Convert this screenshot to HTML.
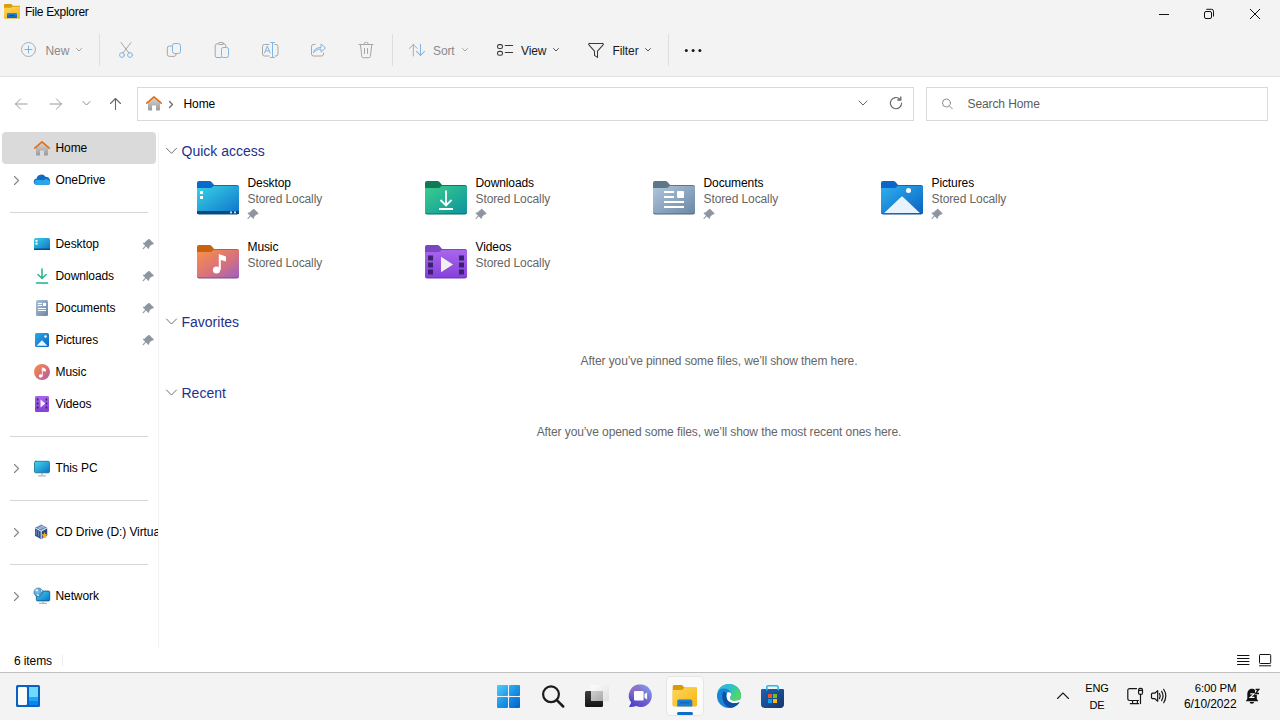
<!DOCTYPE html>
<html><head><meta charset="utf-8">
<style>
*{margin:0;padding:0;box-sizing:border-box}
html,body{width:1280px;height:720px;overflow:hidden;background:#fff;font-family:"Liberation Sans",sans-serif;color:#000}
.a{position:absolute}
.t{position:absolute;white-space:nowrap;font-size:12px;line-height:12px;letter-spacing:-0.1px}
svg{position:absolute;overflow:visible}
#top{left:0;top:0;width:1280px;height:77px;background:#f3f3f3;border-bottom:1px solid #e3e3e3}
.sep{position:absolute;width:1px;background:#dedede}
.box{position:absolute;border:1px solid #d9d9d9;background:#fff}
.navsep{position:absolute;left:10px;width:138px;height:1px;background:#d5d5d5}
.hdr{position:absolute;font-size:14px;line-height:14px;color:#23318e;white-space:nowrap}
.gray{color:#666}
#task{left:0;top:672px;width:1280px;height:48px;background:#f3f3f3;border-top:1px solid #c0c0c0}
</style></head><body>
<div id="top" class="a"></div>

<!-- title -->
<div class="t" style="left:25px;top:6px;letter-spacing:-0.3px">File Explorer</div>

<!-- command bar text -->
<div class="t" style="left:45.5px;top:45px;color:#8a8a8a">New</div>
<div class="t" style="left:433px;top:45px;color:#8a8a8a">Sort</div>
<div class="t" style="left:521px;top:45px;color:#1a1a1a">View</div>
<div class="t" style="left:612.5px;top:45px;color:#1a1a1a">Filter</div>
<div class="sep" style="left:99px;top:34px;height:32px"></div>
<div class="sep" style="left:392px;top:34px;height:32px"></div>
<div class="sep" style="left:668px;top:34px;height:32px"></div>

<!-- address row -->
<div class="box" style="left:137px;top:87px;width:777px;height:34px"></div>
<div class="box" style="left:926px;top:87px;width:342px;height:34px"></div>
<div class="t" style="left:183.5px;top:98px">Home</div>
<div class="t" style="left:967.5px;top:98px;color:#5c5c5c">Search Home</div>

<!-- nav pane -->
<div class="a" style="left:2px;top:132px;width:154px;height:32px;background:#dadada;border-radius:4px"></div>
<div class="a" style="left:158px;top:132px;width:1px;height:517px;background:#f3f3f3"></div>
<div class="t" style="left:55.5px;top:142px">Home</div>
<div class="t" style="left:55.5px;top:174px">OneDrive</div>
<div class="navsep" style="top:212px"></div>
<div class="t" style="left:55.5px;top:238px">Desktop</div>
<div class="t" style="left:55.5px;top:270px">Downloads</div>
<div class="t" style="left:55.5px;top:302px">Documents</div>
<div class="t" style="left:55.5px;top:334px">Pictures</div>
<div class="t" style="left:55.5px;top:366px">Music</div>
<div class="t" style="left:55.5px;top:398px">Videos</div>
<div class="navsep" style="top:436px"></div>
<div class="t" style="left:55.5px;top:462px">This PC</div>
<div class="navsep" style="top:500px"></div>
<div class="a" style="left:0;top:520px;width:158px;height:24px;overflow:hidden"><div class="t" style="left:55.5px;top:6px">CD Drive (D:) Virtual Box</div></div>
<div class="navsep" style="top:564px"></div>
<div class="t" style="left:55.5px;top:590px">Network</div>

<!-- main content -->
<div class="hdr" style="left:181.5px;top:143.5px">Quick access</div>
<div class="hdr" style="left:181.5px;top:315px">Favorites</div>
<div class="hdr" style="left:181.5px;top:385.5px">Recent</div>

<div class="t" style="left:247.5px;top:177px">Desktop</div>
<div class="t gray" style="left:247.5px;top:192.5px">Stored Locally</div>
<div class="t" style="left:475.5px;top:177px">Downloads</div>
<div class="t gray" style="left:475.5px;top:192.5px">Stored Locally</div>
<div class="t" style="left:703.5px;top:177px">Documents</div>
<div class="t gray" style="left:703.5px;top:192.5px">Stored Locally</div>
<div class="t" style="left:931.5px;top:177px">Pictures</div>
<div class="t gray" style="left:931.5px;top:192.5px">Stored Locally</div>
<div class="t" style="left:247.5px;top:241px">Music</div>
<div class="t gray" style="left:247.5px;top:256.5px">Stored Locally</div>
<div class="t" style="left:475.5px;top:241px">Videos</div>
<div class="t gray" style="left:475.5px;top:256.5px">Stored Locally</div>

<div class="t gray" style="left:158px;width:1122px;text-align:center;top:355px">After you’ve pinned some files, we’ll show them here.</div>
<div class="t gray" style="left:158px;width:1122px;text-align:center;top:425.5px">After you’ve opened some files, we’ll show the most recent ones here.</div>

<!-- status bar -->
<div class="t" style="left:14px;top:654.5px">6 items</div>
<div class="a" style="left:62px;top:655px;width:1px;height:11px;background:#ececec"></div>

<!-- taskbar -->
<div id="task" class="a"></div>
<div class="a" style="left:666px;top:676px;width:38px;height:40px;background:#fafafa;border:1px solid #e6e6e6;border-radius:4px"></div>
<div class="a" style="left:677px;top:712px;width:16px;height:3px;background:#0a6fcc;border-radius:2px"></div>
<div class="t" style="left:1085px;top:683px;font-size:11px;line-height:11px;width:24px;text-align:center">ENG</div>
<div class="t" style="left:1085px;top:699.5px;font-size:11px;line-height:11px;width:24px;text-align:center">DE</div>
<div class="t" style="left:1136px;width:100.5px;text-align:right;top:682.5px;font-size:11.4px;line-height:11.4px">6:00 PM</div>
<div class="t" style="left:1136px;width:100.5px;text-align:right;top:697.5px;font-size:12px;line-height:12px">6/10/2022</div>


<!-- ===== ICONS ===== -->
<!-- title folder -->
<svg style="left:4px;top:4px" width="16" height="14" viewBox="0 0 16 14">
 <defs><linearGradient id="tf" x1="0" y1="0" x2="0.6" y2="1"><stop offset="0" stop-color="#ffd862"/><stop offset="1" stop-color="#f8b81c"/></linearGradient>
 <linearGradient id="tb" x1="0" y1="0" x2="0" y2="1"><stop offset="0" stop-color="#1a90e6"/><stop offset="1" stop-color="#0b62c0"/></linearGradient></defs>
 <path d="M0,1 a1,1 0 0 1 1,-1 h6 a1,1 0 0 1 0.8,0.4 l1,1.4 h6.7 a0.5,0.5 0 0 1 0.5,0.5 v12.2 h-16z" fill="#d99e0a"/>
 <path d="M0,3.8 h6.8 a1,1 0 0 0 0.7,-0.3 l0.8,-0.8 h7.7 v10.8 a0.5,0.5 0 0 1 -0.5,0.5 h-15 a0.5,0.5 0 0 1 -0.5,-0.5z" fill="url(#tf)"/>
 <path d="M3,14 v-4 a1.1,1.1 0 0 1 1.1,-1.1 h7.8 a1.1,1.1 0 0 1 1.1,1.1 v4z" fill="url(#tb)"/>
 <rect x="5.5" y="11" width="5" height="1.1" fill="#0c4a94"/>
</svg>
<!-- window controls -->
<svg style="left:1150px;top:0" width="130" height="30" viewBox="1150 0 130 30" fill="none" stroke="#111" stroke-width="1">
 <path d="M1159,14.5 h10"/>
 <rect x="1204.5" y="11.5" width="7" height="7" rx="1.5"/>
 <path d="M1206.3,9.3 h5.2 a2,2 0 0 1 2,2 v5.2" />
 <path d="M1250,9 l10,10 M1260,9 l-10,10"/>
</svg>

<!-- command bar icons -->
<svg style="left:0;top:30px" width="720" height="40" viewBox="0 30 720 40" fill="none" stroke-linecap="round" stroke-linejoin="round">
 <!-- New -->
 <circle cx="28.5" cy="49.5" r="7" stroke="#adadad" stroke-width="1"/>
 <path d="M28.5,46 v7 M25,49.5 h7" stroke="#79b0e0" stroke-width="1"/>
 <path d="M76.5,48.5 l2.5,2.5 l2.5,-2.5" stroke="#a0a0a0" stroke-width="1"/>
 <!-- Cut -->
 <path d="M121,42.5 L129,53 M131,42.5 L123,53" stroke="#a6a6a6" stroke-width="1"/>
 <circle cx="122" cy="55" r="2.4" stroke="#82b6e2" stroke-width="1"/>
 <circle cx="130" cy="55" r="2.4" stroke="#82b6e2" stroke-width="1"/>
 <!-- Copy -->
 <rect x="172.5" y="43.5" width="8" height="10" rx="2" stroke="#82b6e2" stroke-width="1"/>
 <path d="M171.5,46 h-2 a2.2,2.2 0 0 0 -2.2,2.2 v6 a2.2,2.2 0 0 0 2.2,2.2 h4.5 a2.2,2.2 0 0 0 2.2,-2.2" stroke="#a6a6a6" stroke-width="1"/>
 <!-- Paste -->
 <path d="M221,57.5 h-4 a1.8,1.8 0 0 1 -1.8,-1.8 v-10 a1.8,1.8 0 0 1 1.8,-1.8 h1.5 M222.5,43.9 h1.5 a1.8,1.8 0 0 1 1.8,1.8 v1" stroke="#a6a6a6" stroke-width="1"/>
 <rect x="218.5" y="42.5" width="5" height="2" rx="1" stroke="#a6a6a6" stroke-width="1"/>
 <rect x="221.5" y="47.5" width="7" height="10" rx="1.8" stroke="#82b6e2" stroke-width="1"/>
 <!-- Rename -->
 <path d="M269,44.5 h-4.5 a2,2 0 0 0 -2,2 v7.5 a2,2 0 0 0 2,2 h4.5 M275,44.5 h1 a2,2 0 0 1 2,2 v7.5 a2,2 0 0 1 -2,2 h-1" stroke="#a6a6a6" stroke-width="1"/>
 <path d="M264.5,53 l2.8,-7 l2.8,7 M265.5,50.8 h3.6" stroke="#82b6e2" stroke-width="1"/>
 <path d="M272.5,42.5 v15 M270.5,42.5 h4 M270.5,57.5 h4" stroke="#82b6e2" stroke-width="1"/>
 <!-- Share -->
 <path d="M315,44.5 h-1.5 a2,2 0 0 0 -2,2 v7.5 a2,2 0 0 0 2,2 h8 a2,2 0 0 0 2,-2 v-1" stroke="#a6a6a6" stroke-width="1"/>
 <path d="M313.5,52.5 c0.5,-3 3,-5 7.5,-5 v-3.5 l4.5,4 l-4.5,4 v-3 c-3,0 -5.5,1.5 -7.5,3.5z" stroke="#82b6e2" stroke-width="1"/>
 <!-- Delete -->
 <path d="M359,44.5 h14 M364,44.5 v-0.5 a1.6,1.6 0 0 1 1.6,-1.6 h1 a1.6,1.6 0 0 1 1.6,1.6 v0.5" stroke="#a6a6a6" stroke-width="1"/>
 <path d="M360.5,45 l1.3,11.5 a1.5,1.5 0 0 0 1.5,1.2 h5.6 a1.5,1.5 0 0 0 1.5,-1.2 l1.3,-11.5" stroke="#a6a6a6" stroke-width="1"/>
 <path d="M364.5,48.5 v5 M367.5,48.5 v5" stroke="#a6a6a6" stroke-width="1"/>
 <!-- Sort -->
 <path d="M413.3,56 v-11.5 M409.3,48.5 l4,-4 l4,4" stroke="#ababab" stroke-width="1"/>
 <path d="M420.5,44.3 v11.2 M416.5,51.4 l4,4.1 l4,-4.1" stroke="#82b6e2" stroke-width="1.05"/>
 <path d="M462.5,48.5 l2.5,2.5 l2.5,-2.5" stroke="#a6a6a6" stroke-width="1"/>
 <!-- View -->
 <rect x="497.5" y="44.6" width="5" height="3.9" rx="1.8" stroke="#3a3a3a" stroke-width="1.1"/>
 <rect x="497.5" y="51.4" width="5" height="3.9" rx="1.8" stroke="#3a3a3a" stroke-width="1.1"/>
 <path d="M505.3,45.5 h7.3 M505.3,52.5 h7.3" stroke="#3a3a3a" stroke-width="1.1"/>
 <path d="M553.5,48.5 l2.5,2.5 l2.5,-2.5" stroke="#555" stroke-width="1"/>
 <!-- Filter -->
 <path d="M589.6,43.4 h12.8 a0.9,0.9 0 0 1 0.7,1.5 l-5.6,6.2 v6.3 l-3,-2 v-4.3 l-5.6,-6.2 a0.9,0.9 0 0 1 0.7,-1.5z" stroke="#3a3a3a" stroke-width="1.05"/>
 <path d="M645.5,48.5 l2.5,2.5 l2.5,-2.5" stroke="#555" stroke-width="1"/>
 <!-- more -->
 <circle cx="686.3" cy="50.6" r="1.5" fill="#1a1a1a"/>
 <circle cx="693.1" cy="50.6" r="1.5" fill="#1a1a1a"/>
 <circle cx="699.9" cy="50.6" r="1.5" fill="#1a1a1a"/>
</svg>

<!-- address row icons -->
<svg style="left:0;top:90px" width="1280" height="30" viewBox="0 90 1280 30" fill="none" stroke-linecap="round" stroke-linejoin="round">
 <path d="M20.5,99 l-5,5 l5,5 M15.5,104 h11.5" stroke="#9a9a9a" stroke-width="1"/>
 <path d="M56.5,99 l5,5 l-5,5 M61.5,104 h-11.5" stroke="#9a9a9a" stroke-width="1"/>
 <path d="M83,101.5 l3.5,3.5 l3.5,-3.5" stroke="#8a8a8a" stroke-width="1"/>
 <path d="M110.5,103.5 l5,-5 l5,5 M115.5,98.5 v11" stroke="#666" stroke-width="1.1"/>
 <path d="M169.5,101.5 l3,3 l-3,3" stroke="#6a6a6a" stroke-width="1.3"/>
 <path d="M859,101 l4,4 l4,-4" stroke="#666" stroke-width="1"/>
 <path d="M900,99.2 A5.6,5.6 0 1 0 901.6,103" stroke="#666" stroke-width="1.15"/>
 <path d="M900.8,97 v3 h-3" stroke="#666" stroke-width="1.3"/>
 <circle cx="946.5" cy="103" r="4" stroke="#8c8c8c" stroke-width="1"/>
 <path d="M949.5,106 l2.8,2.8" stroke="#8c8c8c" stroke-width="1"/>
</svg>
<!-- house icons -->
<svg style="left:146px;top:96px" width="16" height="15" viewBox="0 0 16 15">
 <defs><linearGradient id="hb" x1="0" y1="0" x2="0" y2="1"><stop offset="0" stop-color="#d6d6d6"/><stop offset="1" stop-color="#9a9a9a"/></linearGradient></defs>
 <path d="M2,6.5 L8,1.5 L14,6.5 V13.5 a1,1 0 0 1 -1,1 h-3 v-5 h-4 v5 h-3 a1,1 0 0 1 -1,-1z" fill="url(#hb)"/>
 <path d="M0.8,7.2 L8,0.8 L15.2,7.2" fill="none" stroke="#ea6a0f" stroke-width="1.6" stroke-linecap="round" stroke-linejoin="round"/>
</svg>
<svg style="left:34px;top:141px" width="16" height="15" viewBox="0 0 16 15">
 <path d="M2,6.5 L8,1.5 L14,6.5 V13.5 a1,1 0 0 1 -1,1 h-3 v-5 h-4 v5 h-3 a1,1 0 0 1 -1,-1z" fill="url(#hb)"/>
 <path d="M0.8,7.2 L8,0.8 L15.2,7.2" fill="none" stroke="#ea6a0f" stroke-width="1.6" stroke-linecap="round" stroke-linejoin="round"/>
</svg>


<!-- nav pane icons -->
<svg style="left:0;top:0" width="160" height="620" viewBox="0 0 160 620" fill="none" stroke-linecap="round" stroke-linejoin="round">
 <defs>
  <linearGradient id="od" x1="0" y1="0" x2="0" y2="1"><stop offset="0" stop-color="#0364b8"/><stop offset="1" stop-color="#1490df"/></linearGradient>
  <linearGradient id="dk" x1="0" y1="0" x2="1" y2="1"><stop offset="0" stop-color="#3ad0e8"/><stop offset="1" stop-color="#0f6fc6"/></linearGradient>
  <linearGradient id="dl" x1="0" y1="0" x2="1" y2="1"><stop offset="0" stop-color="#36c98e"/><stop offset="1" stop-color="#109c9a"/></linearGradient>
  <linearGradient id="dc" x1="0" y1="0" x2="1" y2="1"><stop offset="0" stop-color="#abc2d8"/><stop offset="1" stop-color="#6a86a5"/></linearGradient>
  <linearGradient id="pc" x1="0" y1="0" x2="1" y2="1"><stop offset="0" stop-color="#2aa9ec"/><stop offset="1" stop-color="#0a64c4"/></linearGradient>
  <linearGradient id="mu" x1="0" y1="0" x2="1" y2="1"><stop offset="0" stop-color="#f5904a"/><stop offset="0.6" stop-color="#d76c7a"/><stop offset="1" stop-color="#a55cb8"/></linearGradient>
  <linearGradient id="vi" x1="0" y1="0" x2="0" y2="1"><stop offset="0" stop-color="#a865ea"/><stop offset="1" stop-color="#8440d6"/></linearGradient>
  <linearGradient id="mo" x1="0" y1="0" x2="1" y2="1"><stop offset="0" stop-color="#3cdaea"/><stop offset="1" stop-color="#1070c8"/></linearGradient>
  <radialGradient id="gl" cx="0.4" cy="0.4" r="0.7"><stop offset="0" stop-color="#8cc8ee"/><stop offset="1" stop-color="#2f7fbf"/></radialGradient>
 </defs>
 <!-- chevrons -->
 <path d="M14.5,176.5 l4,4 l-4,4" stroke="#858585" stroke-width="1.1"/>
 <path d="M14.5,464.5 l4,4 l-4,4" stroke="#858585" stroke-width="1.1"/>
 <path d="M14.5,528.5 l4,4 l-4,4" stroke="#858585" stroke-width="1.1"/>
 <path d="M14.5,592.5 l4,4 l-4,4" stroke="#858585" stroke-width="1.1"/>
 <!-- OneDrive cloud -->
 <path d="M37,184.7 a3,3 0 0 1 -0.5,-6 a5,5 0 0 1 9,-2 a3.6,3.6 0 0 1 1.5,0.3 a4,4 0 0 1 3,4 v0.2 a3.5,3.5 0 0 1 -1,3.5z" fill="#0f6cc2"/>
 <path d="M36,184.7 a2.5,2.5 0 0 1 -1.5,-2.8 a2.8,2.8 0 0 1 3,-2.2 l6,0.5 a3.5,3.5 0 0 1 4.5,-0.5 a3,3 0 0 1 2.3,2.6 a2.6,2.6 0 0 1 -1.3,2.4z" fill="#28a8ea"/>
 <!-- Desktop -->
 <rect x="34" y="238" width="16" height="12" rx="1.5" fill="url(#dk)"/>
 <rect x="34" y="248.5" width="16" height="1.5" fill="#0b4e84"/>
 <rect x="35.5" y="240" width="2" height="1.8" fill="#fff"/>
 <rect x="35.5" y="242.8" width="2" height="1.8" fill="#fff"/>
 <!-- Downloads -->
 <path d="M42,269 v9.5 M38,274.5 l4,4 l4,-4" stroke="#2fb98f" stroke-width="1.6"/>
 <path d="M36.5,283 h11" stroke="#1fae8e" stroke-width="1.6"/>
 <!-- Documents -->
 <rect x="36" y="300" width="12" height="16" rx="1.5" fill="url(#dc)"/>
 <g fill="#fff"><rect x="38" y="303" width="4" height="1"/><rect x="38" y="305" width="4" height="1"/><rect x="38" y="308" width="8" height="1"/><rect x="38" y="310" width="8" height="1"/><rect x="43" y="303" width="3" height="3"/></g>
 <!-- Pictures -->
 <rect x="35" y="333" width="14" height="14" rx="1.5" fill="url(#pc)"/>
 <path d="M36.5,345.8 l5.5,-5.6 l5.5,5.6z" fill="#eef6fd"/>
 <circle cx="45.5" cy="336.5" r="1.2" fill="#fff"/>
 <!-- Music -->
 <circle cx="42" cy="372" r="8" fill="url(#mu)"/>
 <path d="M42.3,376 v-8.2 l3,1.2 v2.2 l-3,-1" fill="#fff" stroke="#fff" stroke-width="0.9"/>
 <circle cx="40.6" cy="376" r="1.8" fill="#fff"/>
 <!-- Videos -->
 <rect x="35" y="396" width="14" height="16" rx="1.3" fill="url(#vi)"/>
 <path d="M36.8,399.5 h1.6 M36.8,403.5 h1.6 M36.8,407.5 h1.6 M45.6,399.5 h1.6 M45.6,403.5 h1.6 M45.6,407.5 h1.6" stroke="#3a2068" stroke-width="1.8" stroke-linecap="butt"/>
 <path d="M40.5,399.5 l5,4 l-5,4z" fill="#f2f2f2"/>
 <!-- This PC -->
 <rect x="34.5" y="461.3" width="15" height="11.5" rx="1.3" fill="url(#mo)" stroke="#0f6a90" stroke-width="0.8"/>
 <path d="M42,473 v2" stroke="#a9b6c4" stroke-width="1.5" stroke-linecap="butt"/>
 <path d="M38.5,475.8 h7" stroke="#a9b6c4" stroke-width="1.2"/>
 <!-- CD Drive / VirtualBox -->
 <path d="M35,527.8 l6.2,-3.3 l6,3.3 l-6,3.4z" fill="#5a7db5"/>
 <path d="M35,527.8 l6.2,3.4 v8 l-6.2,-3.4z" fill="#2c4f8e"/>
 <path d="M41.2,531.2 l6,-3.4 v8 l-6,3.4z" fill="#27498a"/>
 <path d="M37.5,526.5 l6,3.3 M39.6,525.4 l6,3.3 M38,529.3 l5.8,-3.2" stroke="#c9d6ea" stroke-width="0.7"/>
 <path d="M36.3,530.3 v4.5 M38.6,531.5 v4.5" stroke="#8ea6cc" stroke-width="0.7"/>
 <path d="M35,527.8 l6.2,3.4 l6,-3.4 M41.2,531.2 v8" stroke="#eef3fa" stroke-width="0.9"/>
 <path d="M44.5,532 l1,2.2 l2.3,0.2 l-1.8,1.5 l0.6,2.3 l-2.1,-1.2 l-2.1,1.2 l0.6,-2.3 l-1.8,-1.5 l2.3,-0.2z" fill="#f7ac0f"/>
 <!-- Network -->
 <rect x="36.4" y="591.1" width="13.3" height="9.8" rx="1.2" fill="url(#mo)" stroke="#0d5c8c" stroke-width="0.9"/>
 <path d="M43,601 v2" stroke="#a9b6c4" stroke-width="1.4" stroke-linecap="butt"/>
 <path d="M39.5,603.4 h7" stroke="#a9b6c4" stroke-width="1.2"/>
 <circle cx="38.3" cy="592.3" r="4.4" fill="url(#gl)" stroke="#2a6fa8" stroke-width="0.5"/>
 <path d="M35,590.3 q1,-1.2 2.6,-1.1 l0.6,1 l-1.2,1 z M36.3,594.5 q1.2,-0.6 2.4,0.2 l0.3,1.5 q-1.5,0 -2.7,-1.7z M40.8,589.5 q1.3,0.8 1.6,2.2 l-1.3,-0.3z" fill="#f2f8fc"/>
</svg>

<!-- main area: section chevrons -->
<svg style="left:160px;top:140px" width="30" height="270" viewBox="160 140 30 270" fill="none" stroke="#6e6e6e" stroke-width="1" stroke-linecap="round" stroke-linejoin="round">
 <path d="M166.5,148.3 l5,5 l5,-5"/>
 <path d="M166.5,319 l5,5 l5,-5"/>
 <path d="M166.5,390 l5,5 l5,-5"/>
</svg>

<!-- tiles -->
<svg style="left:0;top:0" width="0" height="0"><defs>
 <linearGradient id="fdk" x1="0" y1="0" x2="1" y2="1"><stop offset="0" stop-color="#3ad3e6"/><stop offset="1" stop-color="#0d73cc"/></linearGradient>
 <linearGradient id="fdl" x1="0" y1="0" x2="1" y2="1"><stop offset="0" stop-color="#3ccf8c"/><stop offset="1" stop-color="#0b939e"/></linearGradient>
 <linearGradient id="fdc" x1="0" y1="0" x2="1" y2="1"><stop offset="0" stop-color="#b0c6dc"/><stop offset="1" stop-color="#6a87a6"/></linearGradient>
 <linearGradient id="fpc" x1="0" y1="0" x2="1" y2="1"><stop offset="0" stop-color="#2eb0ee"/><stop offset="1" stop-color="#0a62c2"/></linearGradient>
 <linearGradient id="fmu" x1="0" y1="0" x2="1" y2="1"><stop offset="0" stop-color="#f99148"/><stop offset="0.55" stop-color="#d9727a"/><stop offset="1" stop-color="#9c60c4"/></linearGradient>
 <linearGradient id="fvi" x1="0" y1="0" x2="0" y2="1"><stop offset="0" stop-color="#a866ec"/><stop offset="1" stop-color="#8640da"/></linearGradient>
</defs></svg>
<svg style="left:197px;top:181px" width="42" height="33" viewBox="0 0 42 33">
 <path d="M0,2 a2,2 0 0 1 2,-2 h10.5 a2.5,2.5 0 0 1 1.8,0.8 l2.8,3.2 H40 a2,2 0 0 1 2,2 V31 a2,2 0 0 1 -2,2 H2 a2,2 0 0 1 -2,-2z" fill="#0a6acc"/>
 <path d="M0,7 h13.5 a2.5,2.5 0 0 0 1.8,-0.8 l0.9,-0.9 a1.5,1.5 0 0 1 1.1,-0.4 H40.5 a1.5,1.5 0 0 1 1.5,1.5 V31 a2,2 0 0 1 -2,2 H2 a2,2 0 0 1 -2,-2z" fill="url(#fdk)"/>
 <path d="M0.5,32 a2,2 0 0 0 1.5,1 H40 a2,2 0 0 0 1.5,-1" stroke="#0b4f86" stroke-width="1" fill="none"/>
 <rect x="0" y="30" width="42" height="3" fill="#0b4a7c"/><path d="M0,30 h42 v1 a2,2 0 0 1 -2,2 H2 a2,2 0 0 1 -2,-2z" fill="#0b4a7c"/>
 <rect x="33" y="30.5" width="2" height="1.8" fill="#cfe3f0"/><rect x="37" y="30.5" width="2" height="1.8" fill="#cfe3f0"/>
 <rect x="3" y="10" width="3" height="3" fill="#fff"/><rect x="3" y="15" width="3" height="3" fill="#fff"/>
</svg>
<svg style="left:425px;top:181px" width="42" height="33" viewBox="0 0 42 33">
 <path d="M0,2 a2,2 0 0 1 2,-2 h10.5 a2.5,2.5 0 0 1 1.8,0.8 l2.8,3.2 H40 a2,2 0 0 1 2,2 V31 a2,2 0 0 1 -2,2 H2 a2,2 0 0 1 -2,-2z" fill="#0e7a58"/>
 <path d="M0,7 h13.5 a2.5,2.5 0 0 0 1.8,-0.8 l0.9,-0.9 a1.5,1.5 0 0 1 1.1,-0.4 H40.5 a1.5,1.5 0 0 1 1.5,1.5 V31 a2,2 0 0 1 -2,2 H2 a2,2 0 0 1 -2,-2z" fill="url(#fdl)"/>
 <path d="M0.5,32 a2,2 0 0 0 1.5,1 H40 a2,2 0 0 0 1.5,-1" stroke="#0b6a60" stroke-width="1" fill="none"/>
 <path d="M21,9.5 v15 M15.5,19 l5.5,5.5 l5.5,-5.5" stroke="#fff" stroke-width="1.8" fill="none" stroke-linecap="butt"/>
 <rect x="14" y="27" width="14" height="2" fill="#fff"/>
</svg>
<svg style="left:653px;top:181px" width="42" height="33" viewBox="0 0 42 33">
 <path d="M0,2 a2,2 0 0 1 2,-2 h10.5 a2.5,2.5 0 0 1 1.8,0.8 l2.8,3.2 H40 a2,2 0 0 1 2,2 V31 a2,2 0 0 1 -2,2 H2 a2,2 0 0 1 -2,-2z" fill="#5b7788"/>
 <path d="M0,7 h13.5 a2.5,2.5 0 0 0 1.8,-0.8 l0.9,-0.9 a1.5,1.5 0 0 1 1.1,-0.4 H40.5 a1.5,1.5 0 0 1 1.5,1.5 V31 a2,2 0 0 1 -2,2 H2 a2,2 0 0 1 -2,-2z" fill="url(#fdc)"/>
 <path d="M0.5,32 a2,2 0 0 0 1.5,1 H40 a2,2 0 0 0 1.5,-1" stroke="#4c667d" stroke-width="1" fill="none"/>
 <rect x="11" y="10" width="10" height="2" fill="#fff"/><rect x="11" y="15" width="10" height="2" fill="#fff"/>
 <rect x="24" y="10" width="7" height="7" rx="1" fill="#fff"/>
 <rect x="11" y="20" width="20" height="2" fill="#fff"/><rect x="11" y="25" width="20" height="2" fill="#fff"/>
</svg>
<svg style="left:881px;top:181px" width="42" height="33" viewBox="0 0 42 33">
 <path d="M0,2 a2,2 0 0 1 2,-2 h10.5 a2.5,2.5 0 0 1 1.8,0.8 l2.8,3.2 H40 a2,2 0 0 1 2,2 V31 a2,2 0 0 1 -2,2 H2 a2,2 0 0 1 -2,-2z" fill="#0a66c8"/>
 <path d="M0,7 h13.5 a2.5,2.5 0 0 0 1.8,-0.8 l0.9,-0.9 a1.5,1.5 0 0 1 1.1,-0.4 H40.5 a1.5,1.5 0 0 1 1.5,1.5 V31 a2,2 0 0 1 -2,2 H2 a2,2 0 0 1 -2,-2z" fill="url(#fpc)"/>
 <path d="M0.5,32 a2,2 0 0 0 1.5,1 H40 a2,2 0 0 0 1.5,-1" stroke="#0a55a8" stroke-width="1" fill="none"/>
 <path d="M3.2,32 L19.8,16.2 a1.7,1.7 0 0 1 2.4,0 L38.9,32z" fill="#e8f3fc"/>
 <circle cx="27.5" cy="9.5" r="2.5" fill="#fff"/>
</svg>
<svg style="left:197px;top:245px" width="42" height="33" viewBox="0 0 42 33">
 <path d="M0,2 a2,2 0 0 1 2,-2 h10.5 a2.5,2.5 0 0 1 1.8,0.8 l2.8,3.2 H40 a2,2 0 0 1 2,2 V31 a2,2 0 0 1 -2,2 H2 a2,2 0 0 1 -2,-2z" fill="#c8620f"/>
 <path d="M0,7 h13.5 a2.5,2.5 0 0 0 1.8,-0.8 l0.9,-0.9 a1.5,1.5 0 0 1 1.1,-0.4 H40.5 a1.5,1.5 0 0 1 1.5,1.5 V31 a2,2 0 0 1 -2,2 H2 a2,2 0 0 1 -2,-2z" fill="url(#fmu)"/>
 <path d="M0.5,32 a2,2 0 0 0 1.5,1 H40 a2,2 0 0 0 1.5,-1" stroke="#7a4a90" stroke-width="1" fill="none"/>
 <circle cx="19.5" cy="25" r="3.6" fill="#fff"/>
 <path d="M21.8,25 V9 l7.2,2.5 v5 l-5.2,-1.6 V25z" fill="#fff"/>
</svg>
<svg style="left:425px;top:245px" width="42" height="33" viewBox="0 0 42 33">
 <path d="M0,2 a2,2 0 0 1 2,-2 h10.5 a2.5,2.5 0 0 1 1.8,0.8 l2.8,3.2 H40 a2,2 0 0 1 2,2 V31 a2,2 0 0 1 -2,2 H2 a2,2 0 0 1 -2,-2z" fill="#7a46c2"/>
 <path d="M0,7 h13.5 a2.5,2.5 0 0 0 1.8,-0.8 l0.9,-0.9 a1.5,1.5 0 0 1 1.1,-0.4 H40.5 a1.5,1.5 0 0 1 1.5,1.5 V31 a2,2 0 0 1 -2,2 H2 a2,2 0 0 1 -2,-2z" fill="url(#fvi)"/>
 <path d="M0.5,32 a2,2 0 0 0 1.5,1 H40 a2,2 0 0 0 1.5,-1" stroke="#6a34b8" stroke-width="1" fill="none"/>
 <g fill="#3b2170"><rect x="3" y="10.5" width="5" height="5"/><rect x="3" y="17.5" width="5" height="5"/><rect x="3" y="24.5" width="5" height="5"/>
 <rect x="34" y="10.5" width="5" height="5"/><rect x="34" y="17.5" width="5" height="5"/><rect x="34" y="24.5" width="5" height="5"/></g>
 <path d="M16,11.8 L28,19.5 L16,27.2z" fill="#f0f0f0"/>
</svg>



<svg style="left:0;top:0" width="1280" height="300" viewBox="0 0 1280 300"><g transform="translate(247.4,209.2)"><path d="M6.4,0.2 L10.6,4.4 L8.2,5.3 L6.2,7.4 L6,9 L0.8,3.9 L2.4,3.7 L4.5,1.7 Z M3.4,6.2 L0.6,9.3" fill="#8d96a0" stroke="#8d96a0" stroke-width="1.1" stroke-linejoin="round" stroke-linecap="round"/></g><g transform="translate(475.4,209.2)"><path d="M6.4,0.2 L10.6,4.4 L8.2,5.3 L6.2,7.4 L6,9 L0.8,3.9 L2.4,3.7 L4.5,1.7 Z M3.4,6.2 L0.6,9.3" fill="#8d96a0" stroke="#8d96a0" stroke-width="1.1" stroke-linejoin="round" stroke-linecap="round"/></g><g transform="translate(703.4,209.2)"><path d="M6.4,0.2 L10.6,4.4 L8.2,5.3 L6.2,7.4 L6,9 L0.8,3.9 L2.4,3.7 L4.5,1.7 Z M3.4,6.2 L0.6,9.3" fill="#8d96a0" stroke="#8d96a0" stroke-width="1.1" stroke-linejoin="round" stroke-linecap="round"/></g><g transform="translate(931.4,209.2)"><path d="M6.4,0.2 L10.6,4.4 L8.2,5.3 L6.2,7.4 L6,9 L0.8,3.9 L2.4,3.7 L4.5,1.7 Z M3.4,6.2 L0.6,9.3" fill="#8d96a0" stroke="#8d96a0" stroke-width="1.1" stroke-linejoin="round" stroke-linecap="round"/></g><g transform="translate(142.6,239.3)"><path d="M6.4,0.2 L10.6,4.4 L8.2,5.3 L6.2,7.4 L6,9 L0.8,3.9 L2.4,3.7 L4.5,1.7 Z M3.4,6.2 L0.6,9.3" fill="#8d96a0" stroke="#8d96a0" stroke-width="1.1" stroke-linejoin="round" stroke-linecap="round"/></g><g transform="translate(142.6,271.3)"><path d="M6.4,0.2 L10.6,4.4 L8.2,5.3 L6.2,7.4 L6,9 L0.8,3.9 L2.4,3.7 L4.5,1.7 Z M3.4,6.2 L0.6,9.3" fill="#8d96a0" stroke="#8d96a0" stroke-width="1.1" stroke-linejoin="round" stroke-linecap="round"/></g><g transform="translate(142.6,303.3)"><path d="M6.4,0.2 L10.6,4.4 L8.2,5.3 L6.2,7.4 L6,9 L0.8,3.9 L2.4,3.7 L4.5,1.7 Z M3.4,6.2 L0.6,9.3" fill="#8d96a0" stroke="#8d96a0" stroke-width="1.1" stroke-linejoin="round" stroke-linecap="round"/></g><g transform="translate(142.6,335.3)"><path d="M6.4,0.2 L10.6,4.4 L8.2,5.3 L6.2,7.4 L6,9 L0.8,3.9 L2.4,3.7 L4.5,1.7 Z M3.4,6.2 L0.6,9.3" fill="#8d96a0" stroke="#8d96a0" stroke-width="1.1" stroke-linejoin="round" stroke-linecap="round"/></g></svg>
<!-- status bar icons -->
<svg style="left:1230px;top:650px" width="50" height="20" viewBox="1230 650 50 20" fill="none" stroke="#111" stroke-linecap="round">
 <path d="M1237.5,655.5 h11.5 M1237.5,658.5 h11.5 M1237.5,661.5 h11.5 M1237.5,664.5 h11.5" stroke-width="1"/>
 <rect x="1259.5" y="654.5" width="11.2" height="9" rx="0.8" stroke-width="1"/>
 <path d="M1259.5,665.8 h11.2" stroke-width="1"/>
</svg>

<!-- taskbar icons -->
<svg style="left:0;top:672px" width="1280" height="48" viewBox="0 672 1280 48">
 <defs>
  <linearGradient id="wst" gradientUnits="userSpaceOnUse" x1="497" y1="685" x2="520" y2="708"><stop offset="0" stop-color="#52cdfa"/><stop offset="0.5" stop-color="#1a95e8"/><stop offset="1" stop-color="#0262c8"/></linearGradient>
  <linearGradient id="tvb" x1="0" y1="0" x2="1" y2="1"><stop offset="0" stop-color="#fdfdfd"/><stop offset="1" stop-color="#dedede"/></linearGradient>
  <linearGradient id="tvf" x1="0" y1="0" x2="0" y2="1"><stop offset="0" stop-color="#3e3e3e"/><stop offset="1" stop-color="#151515"/></linearGradient>
  <linearGradient id="tvm" x1="0" y1="0" x2="1" y2="1"><stop offset="0" stop-color="#cfcfcf"/><stop offset="1" stop-color="#a8a8a8"/></linearGradient>
  <linearGradient id="cht" x1="0.1" y1="1" x2="0.9" y2="0"><stop offset="0" stop-color="#4a3cc6"/><stop offset="0.55" stop-color="#7468d2"/><stop offset="1" stop-color="#86a6f2"/></linearGradient><radialGradient id="cht2" cx="0.2" cy="0.15" r="0.5"><stop offset="0" stop-color="#a274b8" stop-opacity="0.8"/><stop offset="1" stop-color="#a274b8" stop-opacity="0"/></radialGradient>
  <linearGradient id="fey" x1="0" y1="0" x2="1" y2="1"><stop offset="0" stop-color="#ffd658"/><stop offset="1" stop-color="#f8b512"/></linearGradient>
  <linearGradient id="edg1" x1="0" y1="0" x2="1" y2="1"><stop offset="0" stop-color="#35c1f1"/><stop offset="1" stop-color="#0b62c4"/></linearGradient>
  <linearGradient id="edg2" x1="0" y1="0" x2="1" y2="0.6"><stop offset="0" stop-color="#2fb5f2"/><stop offset="0.5" stop-color="#2ac3c8"/><stop offset="1" stop-color="#58d85a"/></linearGradient>
  <linearGradient id="sto" x1="0" y1="0" x2="1" y2="1"><stop offset="0" stop-color="#1e62b4"/><stop offset="1" stop-color="#15356c"/></linearGradient>
 </defs>
 <!-- widgets -->
 <rect x="16" y="685" width="24" height="22" rx="1.5" fill="#0a60c4"/>
 <rect x="18" y="687" width="9" height="18" rx="1.3" fill="#fbfbfb"/>
 <rect x="29" y="687" width="9" height="10" fill="#6fdaff"/>
 <rect x="29" y="697" width="9" height="4" fill="#1aa7f5"/>
 <rect x="29" y="701" width="9" height="4" fill="#0a84e6"/>
 <!-- start -->
 <rect x="497" y="685" width="11" height="11" rx="1" fill="url(#wst)"/>
 <rect x="509" y="685" width="11" height="11" rx="1" fill="url(#wst)"/>
 <rect x="497" y="697" width="11" height="11" rx="1" fill="url(#wst)"/>
 <rect x="509" y="697" width="11" height="11" rx="1" fill="url(#wst)"/>
 <!-- search -->
 <circle cx="551" cy="694.3" r="7.9" fill="none" stroke="#1c1c1c" stroke-width="2.2"/>
 <path d="M556.8,700.1 L563.2,706.5" stroke="#1c1c1c" stroke-width="2.5" stroke-linecap="round"/>
 <!-- task view -->
 <rect x="591" y="685" width="18" height="16" rx="1.5" fill="url(#tvb)"/>
 <rect x="585" y="691" width="18" height="16" rx="1.5" fill="url(#tvf)"/>
 <rect x="591" y="691" width="12" height="10" fill="url(#tvm)"/>
 <!-- chat -->
 <path d="M640.8,684.5 a11.2,11.2 0 1 1 -4.5,21.5 c-2,0.8 -4.5,1.2 -7.3,1 l2.2,-4.5 a11.2,11.2 0 0 1 9.6,-18z" fill="url(#cht)"/>
 <path d="M640.8,684.5 a11.2,11.2 0 1 1 -4.5,21.5 c-2,0.8 -4.5,1.2 -7.3,1 l2.2,-4.5 a11.2,11.2 0 0 1 9.6,-18z" fill="url(#cht2)"/>
 <rect x="634" y="691" width="9.6" height="9.5" rx="1.2" fill="#fff"/>
 <path d="M644.5,694 l2.6,-1.6 v7 l-2.6,-1.6z" fill="#fff"/>
 <!-- file explorer -->
 <path d="M672.7,686.5 a1.5,1.5 0 0 1 1.5,-1.5 h7.3 a1.5,1.5 0 0 1 1.1,0.5 l1.8,2 h12.1 a0.5,0.5 0 0 1 0.5,0.5 v17 h-24.3z" fill="#d99b0c"/>
 <path d="M672.7,690 h8.8 a1.5,1.5 0 0 0 1.1,-0.5 l1.5,-1.6 h12.9 v17.4 a1.1,1.1 0 0 1 -1.1,1.1 h-22.1 a1.1,1.1 0 0 1 -1.1,-1.1z" fill="url(#fey)"/>
 <path d="M677.3,706.4 v-5.2 a1.7,1.7 0 0 1 1.7,-1.7 h11.6 a1.7,1.7 0 0 1 1.7,1.7 v5.2z" fill="#1a7ed6"/>
 <rect x="680" y="702.3" width="9.5" height="1" fill="#0d5fa8"/>
 <!-- edge -->
 <circle cx="729" cy="696" r="12" fill="#1a84d8"/>
 <path d="M717.2,694 C718,688 723,684 729,684 C736,684 741,689.5 741,695.5 C741,699.5 738,701 734.5,701 C731.5,701 730,699.5 730,698 C730,696.5 731.2,695.8 731.2,694 C731.2,690.5 727.5,688.5 723.5,688.5 C720.5,688.5 718,690.5 717.2,694 Z" fill="url(#edg2)"/>
 <path d="M723.5,691.5 C721.5,696 722.5,703 727.5,706.8 C731.5,709 736.5,706.5 739.5,702.3 C736,703.8 731.5,703.8 728.8,701.6 C726.5,699.6 725.8,696.5 726.8,693.5 Z" fill="#0c4fa6"/>
 <path d="M726.3,694 C726.6,692.5 728,692 729.5,692.3 C731,692.7 731.4,694 731.2,694.8 C731,695.8 730,696.5 730,698 C730,699.8 732,701 734.5,701 C736.5,701 738,700.5 739.5,699.8 L739.5,702.3 C736,703.8 731.5,703.8 728.8,701.6 C726.8,700 726,697 726.3,694Z" fill="#fff"/>
 <path d="M741.2,697 C741,699.5 740.5,701 739.5,702.3 C738,702.2 738,700.5 739.5,699.8 C740.5,699.2 741,698.2 741.2,697Z" fill="#f3f3f3"/>
 <path d="M723.5,691.5 C721.5,696 722.5,703 727.5,706.8 C731.5,709 736.5,706.5 739.5,702.3 C736,703.8 731.5,703.8 728.8,701.6 C726.5,699.6 725.8,696.5 726.8,693.5 Z" fill="#0c4fa6"/>
 <!-- store -->
 <path d="M761,690 a1.3,1.3 0 0 1 1.3,-1.1 h20.4 a1.3,1.3 0 0 1 1.3,1.1 v14.3 a3.6,3.6 0 0 1 -3.6,3.6 h-15.8 a3.6,3.6 0 0 1 -3.6,-3.6z" fill="url(#sto)"/>
 <path d="M766.8,690.5 v-3.2 a1.5,1.5 0 0 1 1.5,-1.5 h8.4 a1.5,1.5 0 0 1 1.5,1.5 v3.2" fill="none" stroke="#22b8f8" stroke-width="1.6"/>
 <rect x="768" y="694" width="4" height="4" fill="#f35325"/>
 <rect x="773" y="694" width="4" height="4" fill="#81bc06"/>
 <rect x="768" y="699" width="4" height="4" fill="#05a6f0"/>
 <rect x="773" y="699" width="4" height="4" fill="#ffba08"/>
 <!-- tray -->
 <path d="M1057.5,698.5 l5.5,-5.5 l5.5,5.5" fill="none" stroke="#1c1c1c" stroke-width="1.1" stroke-linecap="round" stroke-linejoin="round"/>
 <g fill="none" stroke="#161616" stroke-width="1.2" stroke-linecap="round" stroke-linejoin="round">
  <path d="M1136.5,688.6 h-7 a1.7,1.7 0 0 0 -1.7,1.7 v8.5 a1.7,1.7 0 0 0 1.7,1.7 h9"/>
  <path d="M1132.6,700.5 v3 M1137.4,700.5 v3 M1130.3,703.6 h8.3"/>
  <rect x="1138.6" y="688.4" width="3.9" height="6" rx="1.5"/>
  <path d="M1138.6,690.3 h3.9 M1140.5,694.4 v9.2"/>
  <path d="M1151.5,694.2 a1,1 0 0 1 1,-1 h2.3 l2.9,-2.6 v10.6 l-2.9,-2.6 h-2.3 a1,1 0 0 1 -1,-1z"/>
  <path d="M1159.5,693.6 q1.6,2.5 0,5 M1161.6,691.4 q2.9,4.6 0,9.2 M1163.7,689.3 q4.2,6.7 0,13.4"/>
 </g>
 <!-- bell with zz -->
 <path d="M1245.8,701.2 L1247.3,698.8 V693.8 C1247.3,690.8 1249.3,688.8 1251.8,688.8 C1253.2,688.8 1254.2,689.3 1255,690 V694.8 H1256.8 V698.8 L1258.4,701.2 Z" fill="#111"/>
 <path d="M1249.7,702.1 h4.4 a2.2,1.7 0 0 1 -4.4,0z" fill="#111"/>
 <path d="M1250.2,693.9 h4 l-4,3.4 h4.3" fill="none" stroke="#f3f3f3" stroke-width="1.2" stroke-linejoin="miter"/>
 <path d="M1255.6,689.5 h3.2 l-3.2,4 h3.4" fill="none" stroke="#111" stroke-width="1.3" stroke-linejoin="miter"/>
</svg>

</body></html>
